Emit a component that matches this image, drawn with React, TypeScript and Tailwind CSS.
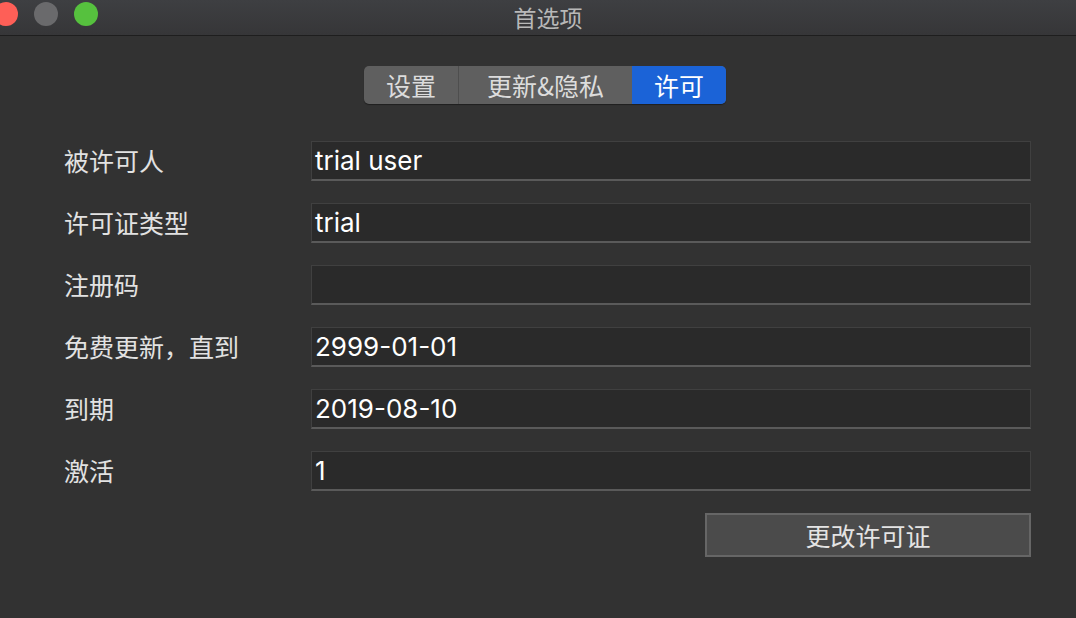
import { useState } from "react"

const rows = [
    { label: "被许可人", value: "trial user" },
    { label: "许可证类型", value: "trial" },
    { label: "注册码", value: "" },
    { label: "免费更新，直到", value: "2999-01-01" },
    { label: "到期", value: "2019-08-10" },
    { label: "激活", value: "1" },
]

const font = { fontFamily: '"Noto Sans CJK SC", "Liberation Sans", sans-serif' }
const valueFont = { fontFamily: 'Inter, "Noto Sans CJK SC", sans-serif' }

const App = () => {
    const [tab, setTab] = useState(2)
    const tabs = ["设置", "更新&隐私", "许可"]
    const widths = ["w-[94px]", "w-[174px]", "w-[94px]"]

    return (
        <div className="w-[1076px] h-[618px] bg-[#323232] overflow-hidden" style={font}>
            {/* title bar */}
            <div className="relative h-[36px] bg-gradient-to-b from-[#3e3f42] to-[#363638] border-b border-[#1e1e1e] flex items-start justify-center pl-[20px]">
                <div className="absolute left-[-6px] top-[2px] flex gap-[16px]">
                    <div className="w-[24px] h-[24px] rounded-full bg-[#fe5f57]" />
                    <div className="w-[24px] h-[24px] rounded-full bg-[#6a6a6c]" />
                    <div className="w-[24px] h-[24px] rounded-full bg-[#56c13e]" />
                </div>
                <span className="text-[23px] text-[#b8b8b8] leading-[34px]">首选项</span>
            </div>

            <div className="flex justify-center pt-[30px] pl-[14px]">
                <div className="flex h-[38px] rounded-[5px] overflow-hidden bg-[#5f5f5f] shadow-[0_1px_1px_rgba(0,0,0,0.4)]">
                    {tabs.map((t, i) => (
                        <button
                            key={t}
                            onClick={() => setTab(i)}
                            className={`${widths[i]} flex items-center justify-center text-[25px] leading-none ${
                                tab === i ? "bg-[#1b63d7] text-white" : "text-[#dcdcdc]"
                            } ${i === 1 ? "border-l border-[#4e4e4e]" : ""}`}
                        >
                            {t}
                        </button>
                    ))}
                </div>
            </div>

            <div className="flex flex-col gap-[22px] pt-[37px] pl-[64px] pr-[45px]">
                {rows.map((r) => (
                    <div key={r.label} className="flex items-center">
                        <div className="w-[247px] text-[25px] leading-none text-[#e2e2e2] -mt-[2px]">{r.label}</div>
                        <div
                            className="w-[720px] h-[40px] bg-[#2a2a2a] border border-[#404040] border-b-[#5a5a5a] border-b-2 flex items-center pl-[3px] text-[26px] leading-none text-white"
                            style={valueFont}
                        >
                            {r.value}
                        </div>
                    </div>
                ))}
                <div className="flex justify-end">
                    <button className="w-[326px] h-[44px] bg-[#4b4b4b] border-2 border-[#666666] text-[25px] leading-none text-[#e4e4e4] flex items-center justify-center">
                        更改许可证
                    </button>
                </div>
            </div>
        </div>
    )
}

export default App
